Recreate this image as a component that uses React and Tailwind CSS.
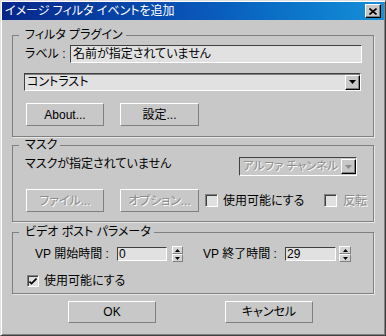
import React from 'react';

const font = "font-['Liberation_Sans','Noto_Sans_CJK_JP',sans-serif] [font-feature-settings:'palt']";
const raised = 'border border-t-white border-l-white border-r-[#808080] border-b-[#808080]';
const sunken = 'border border-t-[#404040] border-l-[#404040] border-r-white border-b-white';
const dim = 'text-[#8c8c8c] [text-shadow:1px_1px_0_#fff]';

function Button({ children, className = '', disabled }) {
  return (
    <button className={`${raised} flex items-center justify-center text-[12px] ${disabled ? dim : 'text-black'} ${className}`}>
      {children}
    </button>
  );
}

function ArrowDown({ color = '#000' }) {
  return (
    <svg width="7" height="4" viewBox="0 0 7 4">
      <path d="M0 0h7L3.5 4z" fill={color} />
    </svg>
  );
}

function DropButton({ disabled }) {
  return (
    <div className="shrink-0 w-[15px] h-[15px] flex items-center justify-center border border-t-white border-l-white border-r-black border-b-black shadow-[inset_-1px_-1px_0_#808080] bg-[#c8c8c8]">
      <ArrowDown color={disabled ? '#8c8c8c' : '#000'} />
    </div>
  );
}

function Checkbox({ checked, size = 'w-[13px] h-[13px]' }) {
  return (
    <div className={`${size} shrink-0 border border-t-[#808080] border-l-[#808080] border-r-white border-b-white bg-[#e0e0e0] shadow-[inset_1px_1px_0_#404040] flex items-center justify-center`}>
      {checked && (
        <svg width="8" height="7" viewBox="0 0 8 7">
          <path d="M0.5 3.5l2 2 5-5" stroke="#000" strokeWidth="1.6" fill="none" />
        </svg>
      )}
    </div>
  );
}

function Spinner({ className = '' }) {
  return (
    <div className={`flex flex-col h-[16px] ${className}`}>
      <div className={`${raised} flex-1 flex items-center justify-center bg-[#d4d4d4]`}>
        <svg width="5" height="3" viewBox="0 0 5 3"><path d="M0 3h5L2.5 0z" fill="#000" /></svg>
      </div>
      <div className={`${raised} flex-1 flex items-center justify-center bg-[#d4d4d4]`}>
        <svg width="5" height="3" viewBox="0 0 5 3"><path d="M0 0h5L2.5 3z" fill="#000" /></svg>
      </div>
    </div>
  );
}

function Group({ title, className = '', children }) {
  return (
    <fieldset className={`ml-[10px] w-[362px] border border-[#808080] shadow-[1px_1px_0_#e8e8e8] ${className}`}>
      <legend className="ml-[6px] pl-[6px] pr-[3px] leading-[14px] text-[12px]">{title}</legend>
      {children}
    </fieldset>
  );
}

export default function App() {
  return (
    <div className={`${font} w-[386px] h-[336px] bg-[#c8c8c8] text-black text-[12px] border border-t-[#e0e0e0] border-l-[#e0e0e0] border-r-[#404040] border-b-[#404040] shadow-[inset_1px_1px_0_#fff,inset_-1px_-1px_0_#808080] p-[1px] flex flex-col`}>
      {/* Title bar */}
      <div className="h-[18px] flex items-center justify-between bg-gradient-to-r from-[#08268a] via-[#0a55b8] to-[#1690d8] pl-[3px] pr-[3px]">
        <span className="text-white text-[12px] leading-none">イメージ フィルタ イベントを追加</span>
        <div className="w-[16px] h-[14px] flex items-center justify-center bg-[#c8c8c8] border border-t-white border-l-white border-r-black border-b-black shadow-[inset_-1px_-1px_0_#808080]">
          <svg width="8" height="7" viewBox="0 0 8 7">
            <path d="M0.5 0.5l7 6M7.5 0.5l-7 6" stroke="#000" strokeWidth="1.6" />
          </svg>
        </div>
      </div>

      {/* Filter plugin */}
      <Group title="フィルタ プラグイン" className="mt-[8px] h-[109px]">
        <div className="flex items-center mt-[3px] pl-[12px]">
          <span className="w-[45px]">ラベル :</span>
          <div className={`${sunken} w-[292px] h-[18px] bg-[#e1e1e1] flex items-center pl-[2px] leading-none`}>
            名前が指定されていません
          </div>
        </div>
        <div className="ml-[11px] mt-[10px] w-[337px] h-[18px] border border-t-[#404040] border-l-[#404040] border-r-white border-b-white shadow-[inset_0_1px_0_#808080] bg-[#e1e1e1] flex items-center justify-between pl-[2px]">
          <span className="leading-none">コントラスト</span>
          <DropButton />
        </div>
        <div className="flex mt-[12px] ml-[13px]">
          <Button className="w-[78px] h-[23px]">About...</Button>
          <Button className="w-[79px] h-[23px] ml-[16px]">設定...</Button>
        </div>
      </Group>

      {/* Mask */}
      <Group title="マスク" className="mt-[1px] h-[84px]">
        <div className="flex items-start mt-[5px]">
          <span className="ml-[12px] leading-[14px]">マスクが指定されていません</span>
          <div className={`${sunken} ml-auto mr-[16px] w-[118px] h-[19px] flex items-center justify-between pl-[3px] overflow-hidden`}>
            <span className={`${dim} leading-none whitespace-nowrap text-[11.5px]`}>アルファ チャンネル</span>
            <DropButton disabled />
          </div>
        </div>
        <div className="flex items-center mt-[13px] ml-[13px]">
          <Button disabled className="w-[78px] h-[23px]">ファイル...</Button>
          <Button disabled className="w-[79px] h-[23px] ml-[16px]">オプション...</Button>
          <div className="ml-[6px]"><Checkbox /></div>
          <span className="ml-[5px] w-[101px]">使用可能にする</span>
          <Checkbox />
          <span className={`ml-[6px] ${dim}`}>反転</span>
        </div>
      </Group>

      {/* Video post */}
      <Group title="ビデオ ポスト パラメータ" className="mt-[3px] h-[69px]">
        <div className="flex items-center mt-[7px] h-[16px]">
          <span className="ml-[22px] w-[82px]">VP 開始時間 :</span>
          <div className={`${sunken} w-[50px] h-[14px] bg-[#e1e1e1] flex items-center pl-[1px] leading-none`}>0</div>
          <Spinner className="ml-[5px] w-[11px]" />
          <span className="ml-[20px] w-[82px]">VP 終了時間 :</span>
          <div className={`${sunken} w-[51px] h-[14px] bg-[#e1e1e1] flex items-center pl-[1px] leading-none`}>29</div>
          <Spinner className="ml-[3px] w-[12px]" />
        </div>
        <div className="flex items-center mt-[10px] ml-[14px]">
          <Checkbox checked size="w-[12px] h-[12px]" />
          <span className="ml-[5px]">使用可能にする</span>
        </div>
      </Group>

      {/* Footer */}
      <div className="flex mt-[7px]">
        <Button className="ml-[66px] w-[88px] h-[22px]">OK</Button>
        <Button className="ml-[69px] w-[88px] h-[22px]">キャンセル</Button>
      </div>
    </div>
  );
}
